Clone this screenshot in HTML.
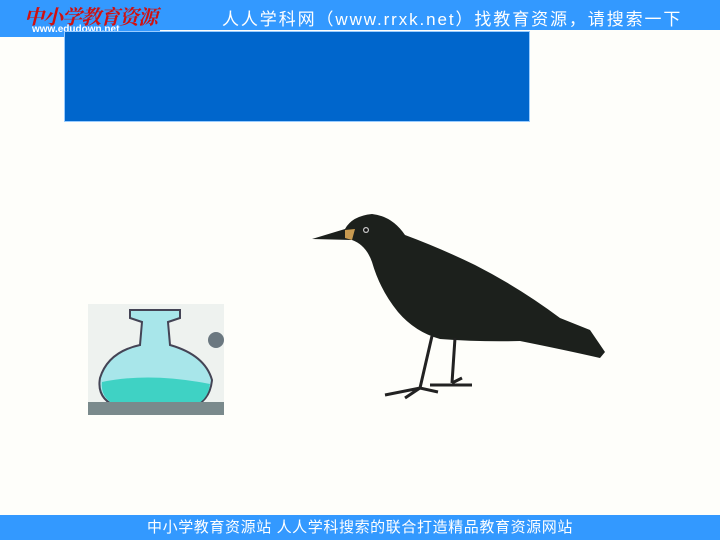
<!DOCTYPE html>
<html><head><meta charset="utf-8"><style>
body{margin:0;width:720px;height:540px;background:#fefefa;position:relative;overflow:hidden;font-family:"Liberation Sans","Noto Sans CJK SC",sans-serif}
.top{position:absolute;left:0;top:0;width:720px;height:30px;background:#3399ff}
.topl{position:absolute;left:0;top:0;width:160px;height:37px;background:#3399ff}
.logo{position:absolute;left:24px;top:1px;color:#d01010;font:italic bold 20px "Noto Serif CJK SC",serif;letter-spacing:-1px}
.url{position:absolute;left:32px;top:24px;color:#fff;font-size:10px;font-weight:bold}
.tt{position:absolute;left:222px;top:5px;color:#fff;font-size:17px;letter-spacing:1.9px;white-space:nowrap}
.box{position:absolute;left:64px;top:31px;width:464px;height:89px;background:#0066cc;border:1.5px solid #99ccff}
.foot{position:absolute;left:0;top:515px;width:720px;height:25px;background:#3399ff;color:#fff;font-size:15px;text-align:center;line-height:25px;letter-spacing:0.6px}
</style></head><body>
<div class="top"></div><div class="topl"></div>
<div class="logo">中小学教育资源</div>
<div class="url">www.edudown.net</div>
<div class="tt">人人学科网（www.rrxk.net）找教育资源，请搜索一下</div>
<div class="box"></div>
<svg style="position:absolute;left:0;top:0" width="720" height="540">
<rect x="88" y="304" width="136" height="111" fill="#eef2ef"/>
<path d="M130,310 L180,310 L180,318 L168,322 L170,345 Q205,355 212,380 Q210,402 190,408 L120,408 Q96,400 100,378 Q108,352 140,345 L142,322 L130,318 Z" fill="#a8e6ea" stroke="#445" stroke-width="2"/>
<path d="M102,382 Q150,372 210,384 Q208,402 190,407 L120,407 Q100,400 102,382Z" fill="#3fd2c4"/>
<path d="M88,402 L224,402 L224,415 L88,415Z" fill="#7a8a8c"/>
<circle cx="216" cy="340" r="8" fill="#6b7880"/>
<path d="M312,239 L345,229 Q352,216 372,214 Q392,216 405,235 Q440,248 475,265 Q520,288 560,318 L590,330 L605,352 L600,358 Q565,350 520,341 Q480,342 440,339 Q415,332 398,312 Q380,290 372,262 Q366,245 352,240 Z" fill="#1c201c"/>
<path d="M345,230 L355,229 L352,240 L345,238Z" fill="#c89a50"/>
<circle cx="366" cy="230" r="3" fill="#ccc"/><circle cx="366" cy="230" r="1.8" fill="#111"/>
<g stroke="#222" stroke-width="3" fill="none">
<path d="M432,336 L420,388 M455,338 L452,383"/>
<path d="M385,395 L420,388 L438,392 M420,388 L405,398 M430,385 L472,385 M452,383 L462,378"/>
</g>
</svg>
<div class="foot">中小学教育资源站 人人学科搜索的联合打造精品教育资源网站</div>
</body></html>
